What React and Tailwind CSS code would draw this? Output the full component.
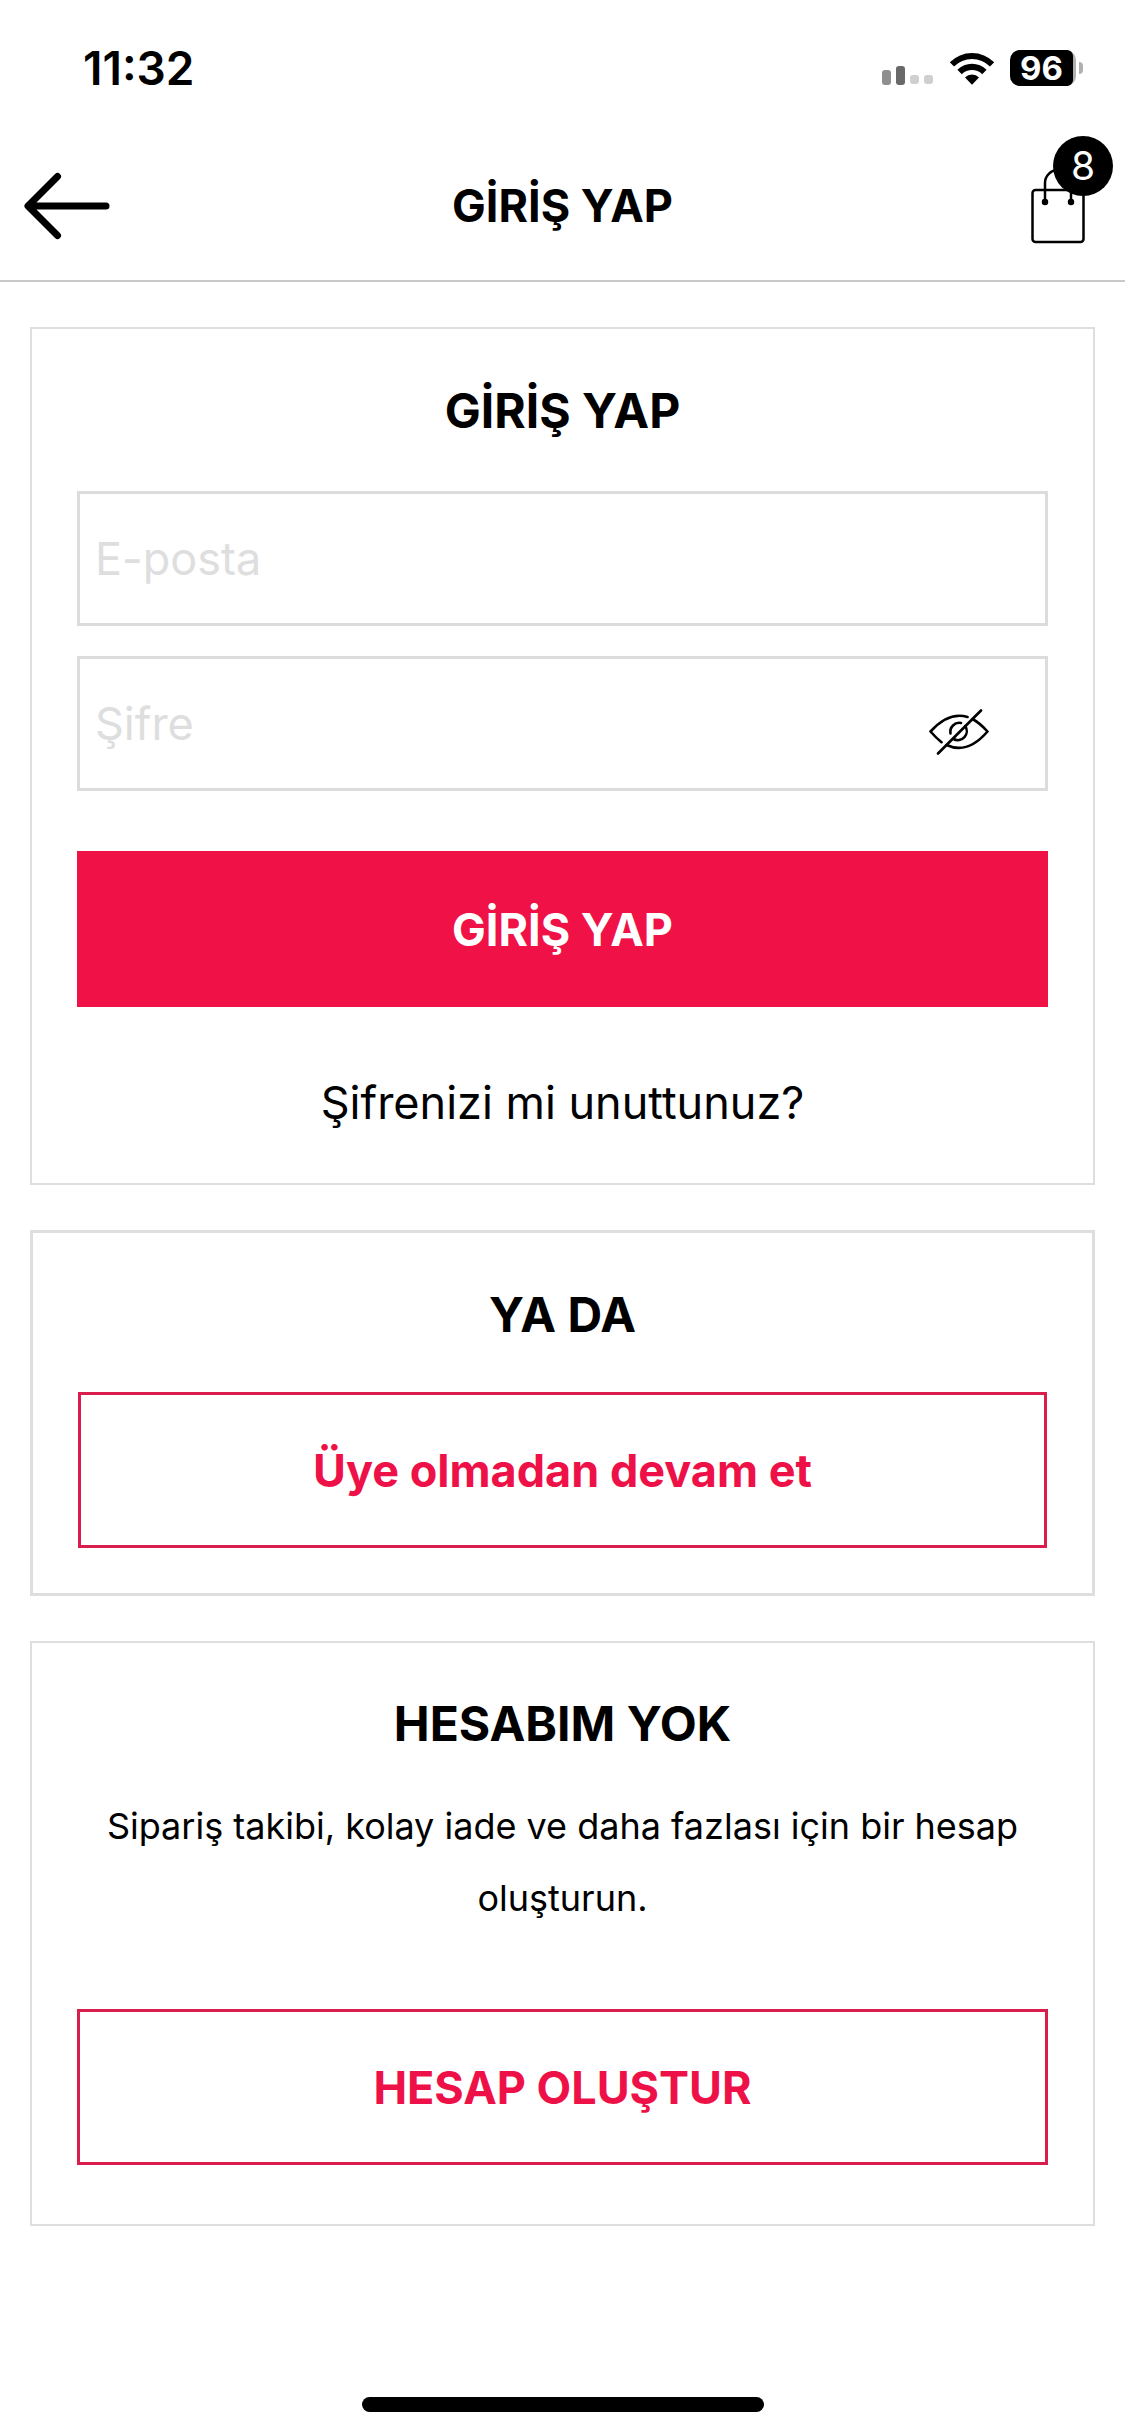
import { useState } from 'react';

function StatusBar() {
  return (
    <div className="flex h-33 items-center justify-between pt-1 pr-[42px] pl-[83px]">
      <span className="text-[46px] leading-[60px] font-semibold">11:32</span>
      <div className="flex items-center gap-[15px]">
        <svg className="h-9 w-[52px]" viewBox="0 0 52 36">
          <rect x="0" y="20" width="9" height="15" rx="3" fill="#8f8f8f" />
          <rect x="14" y="16" width="9" height="19" rx="3" fill="#696969" />
          <rect x="28" y="25" width="9" height="9" rx="3" fill="#cfcfcf" />
          <rect x="42" y="25" width="9" height="9" rx="3" fill="#cfcfcf" />
        </svg>
        <svg className="h-9 w-[46px]" viewBox="0 0 46 36">
          <path d="M0.8 12.2 A31.5 31.5 0 0 1 45.2 12.2 L41 16.4 A25.5 25.5 0 0 0 5 16.4 Z" />
          <path d="M8.4 19.8 A20.6 20.6 0 0 1 37.6 19.8 L33.2 24.2 A14.6 14.6 0 0 0 12.8 24.2 Z" />
          <path d="M16 27.4 A10 10 0 0 1 30 27.4 L23 34.8 Z" />
        </svg>
        <div className="flex items-center gap-[3px]">
          <div className="flex h-9 w-[66px] items-center rounded-[10px] bg-[#b0b0b0]">
            <span className="w-[63px] rounded-l-[10px] rounded-r-[6px] bg-black text-center text-[33px] leading-9 font-bold text-white">96</span>
          </div>
          <div className="h-3 w-1 rounded-r-full bg-[#b0b0b0]" />
        </div>
      </div>
    </div>
  );
}

function Header() {
  return (
    <header className="grid h-[150px] grid-cols-[1fr_auto_1fr] items-center border-b-2 border-[#c9c9c9] px-6">
      <button type="button" aria-label="Geri" className="justify-self-start">
        <svg className="h-[68px] w-[87px]" viewBox="0 0 87 68" fill="none" stroke="currentColor" strokeWidth="7" strokeLinecap="round" strokeLinejoin="round">
          <path d="M33.5 4.5 L4 34 L33.5 63.5 M5 34 H82" />
        </svg>
      </button>
      <h1 className="text-[45px] leading-[60px] font-bold">GİRİŞ YAP</h1>
      <a href="#sepet" aria-label="Sepet" className="relative mr-4 justify-self-end">
        <svg className="h-[76px] w-[54px]" viewBox="0 0 54 76" fill="none" stroke="currentColor" strokeWidth="2.5">
          <rect x="1.5" y="22" width="51" height="52" rx="3" />
          <path d="M14 34 V15 A13 13 0 0 1 40 15 V34" />
          <circle cx="14" cy="34" r="2" fill="currentColor" />
          <circle cx="40" cy="34" r="2" fill="currentColor" />
        </svg>
        <span className="absolute -top-8 -right-7 flex size-15 items-center justify-center rounded-full bg-black text-[39px] text-white">8</span>
      </a>
    </header>
  );
}

function EyeOff() {
  return (
    <svg className="h-[46px] w-[60px]" viewBox="0 0 60 46" fill="none" stroke="currentColor" strokeWidth="2.6" strokeLinecap="round" strokeLinejoin="round">
      <path d="M52 1.5 L9 44.5" />
      <path d="M38.5 8 C24 3.5 12 11 1.5 22.5 C5 26.5 8.5 30 12.5 33.2" />
      <path d="M43.5 10 C49 13 54 17.5 58.5 22.5 C46 37 32.5 43 17.5 36" />
      <path d="M32 14 A9 9 0 0 0 21.5 24.5" />
      <path d="M36.2 17 A9 9 0 0 1 24.5 30" />
    </svg>
  );
}

export default function App() {
  const [showPassword, setShowPassword] = useState(false);

  return (
    <div className="flex min-h-screen flex-col bg-white font-['Inter',sans-serif] text-black">
      <StatusBar />
      <Header />

      <main className="flex flex-col gap-[45px] px-[30px] pt-[45px]">
        {/* Login */}
        <form className="flex flex-col border-2 border-[#dedede] px-[45px] pt-[46px] pb-11" onSubmit={(e) => e.preventDefault()}>
          <h2 className="text-center text-[48px] leading-[72px] font-bold">GİRİŞ YAP</h2>
          <input
            type="email"
            aria-label="E-posta"
            placeholder="E-posta"
            className="mt-11 h-[135px] border-3 border-[#dcdcdc] px-[15px] text-[45px] placeholder:text-[#dedede]"
          />
          <div className="mt-[30px] flex h-[135px] items-center border-3 border-[#dcdcdc] pr-14">
            <input
              type={showPassword ? 'text' : 'password'}
              aria-label="Şifre"
              placeholder="Şifre"
              className="h-full min-w-0 flex-1 px-[15px] text-[45px] placeholder:text-[#dedede]"
            />
            <button type="button" aria-label="Şifreyi göster" className="pt-4" onClick={() => setShowPassword(!showPassword)}>
              <EyeOff />
            </button>
          </div>
          <button type="submit" className="mt-[60px] h-[156px] bg-[#f01146] pt-0.5 text-[45px] font-bold text-white">GİRİŞ YAP</button>
          <a href="#sifremi-unuttum" className="mt-[60px] text-center text-[45px] leading-[72px]">Şifrenizi mi unuttunuz?</a>
        </form>

        {/* Guest checkout */}
        <section className="flex flex-col border-3 border-[#dedede] px-[45px] pt-[46px] pb-[45px]">
          <h2 className="text-center text-[48px] leading-[72px] font-bold">YA DA</h2>
          <button type="button" className="mt-[41px] h-[156px] border-3 border-[#d91e4e] pt-0.5 text-[45px] font-bold text-[#ee1148]">Üye olmadan devam et</button>
        </section>

        {/* Register */}
        <section className="flex flex-col border-2 border-[#dedede] px-[45px] pt-[45px] pb-[59px]">
          <h2 className="text-center text-[48px] leading-[72px] font-bold">HESABIM YOK</h2>
          <p className="mt-[30px] text-center text-[36px] leading-[72px]">
            Sipariş takibi, kolay iade ve daha fazlası için bir hesap oluşturun.
          </p>
          <button type="button" className="mt-[75px] h-[156px] border-3 border-[#d91e4e] pt-0.5 text-[45px] font-bold text-[#ee1148]">HESAP OLUŞTUR</button>
        </section>
      </main>

      <div className="mx-auto mt-auto mb-6 h-[15px] w-[402px] rounded-full bg-black" />
    </div>
  );
}
